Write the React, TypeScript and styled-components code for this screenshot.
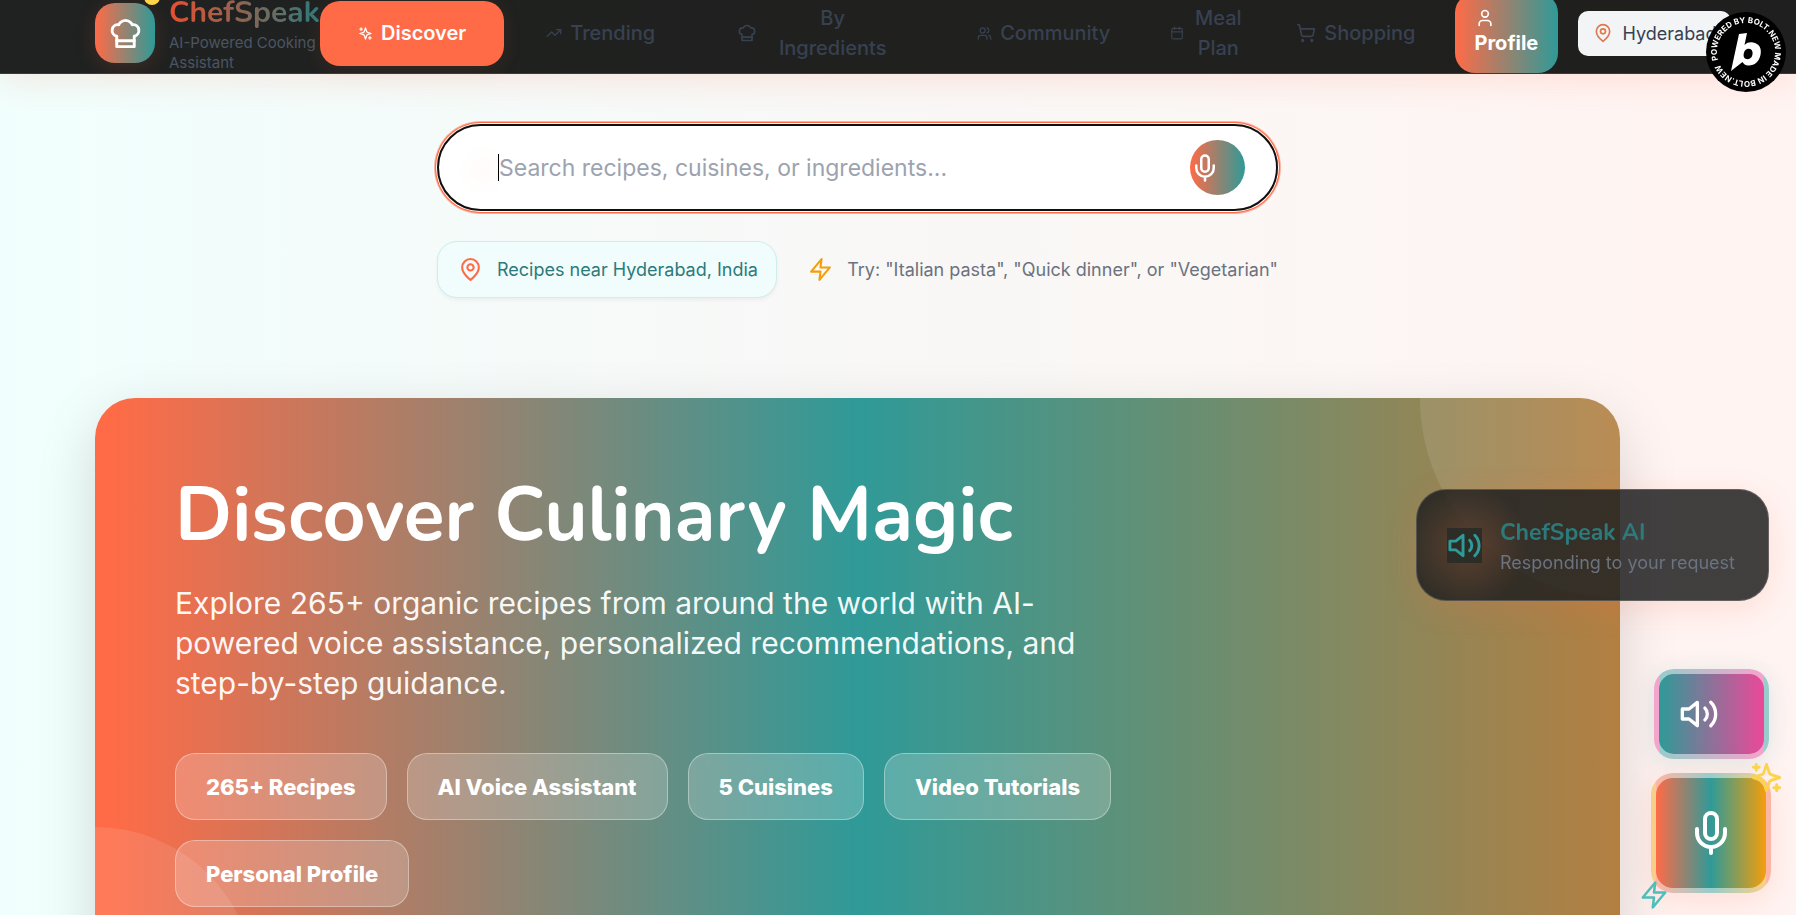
import React from "react";
import styled, { createGlobalStyle, css } from "styled-components";
import { ShoppingCart, TrendingUp, Users, Calendar } from "lucide-react";

const coral = "#ff6b47";
const teal = "#2f9a98";
const body = `Inter, "Liberation Sans", sans-serif`;
const display = `Nunito, Lato, "Open Sans", sans-serif`;

const GlobalStyle = createGlobalStyle`
  * { box-sizing: border-box; }
  body {
    margin: 0;
    font-family: ${body};
    background: #fff3f1;
    overflow-x: hidden;
  }
  button, input { font-family: inherit; }
  button { cursor: pointer; border: 0; }
  svg { flex: none; display: block; }
`;

/* ---------- icons ---------- */
type IconProps = { size: number };
const Glyph = styled.svg.attrs({
  viewBox: "0 0 24 24",
  fill: "none",
  stroke: "currentColor",
  strokeWidth: 2,
  strokeLinecap: "round",
  strokeLinejoin: "round",
  "aria-hidden": true,
})``;

const ChefHat = ({ size }: IconProps) => (
  <Glyph width={size} height={size}>
    <path d="M6 13.87A4 4 0 0 1 7.41 6a5.11 5.11 0 0 1 1.05-1.54 5 5 0 0 1 7.08 0A5.11 5.11 0 0 1 16.59 6 4 4 0 0 1 18 13.87V21H6Z" />
    <path d="M6 17h12" />
  </Glyph>
);
const Sparkles = ({ size }: IconProps) => (
  <Glyph width={size} height={size}>
    <path d="m12 3-1.912 5.813a2 2 0 0 1-1.275 1.275L3 12l5.813 1.912a2 2 0 0 1 1.275 1.275L12 21l1.912-5.813a2 2 0 0 1 1.275-1.275L21 12l-5.813-1.912a2 2 0 0 1-1.275-1.275L12 3Z" />
    <path d="M5 3v4M19 17v4M3 5h4M17 19h4" />
  </Glyph>
);
const Pin = ({ size }: IconProps) => (
  <Glyph width={size} height={size}>
    <path d="M20 10c0 6-8 12-8 12s-8-6-8-12a8 8 0 0 1 16 0Z" />
    <circle cx="12" cy="10" r="3" />
  </Glyph>
);
const Bolt = ({ size }: IconProps) => (
  <Glyph width={size} height={size}>
    <path d="M13 2 3 14h9l-1 8 10-12h-9l1-8Z" />
  </Glyph>
);
const Mic = ({ size }: IconProps) => (
  <Glyph width={size} height={size}>
    <path d="M12 2a3 3 0 0 0-3 3v7a3 3 0 0 0 6 0V5a3 3 0 0 0-3-3Z" />
    <path d="M19 10v2a7 7 0 0 1-14 0v-2M12 19v3" />
  </Glyph>
);
const Volume = ({ size }: IconProps) => (
  <Glyph width={size} height={size}>
    <path d="M11 5 6 9H2v6h4l5 4V5Z" />
    <path d="M15.54 8.46a5 5 0 0 1 0 7.07M19.07 4.93a10 10 0 0 1 0 14.14" />
  </Glyph>
);
const Person = ({ size }: IconProps) => (
  <Glyph width={size} height={size}>
    <path d="M19 21v-2a4 4 0 0 0-4-4H9a4 4 0 0 0-4 4v2" />
    <circle cx="12" cy="7" r="4" />
  </Glyph>
);

/* ---------- page ---------- */
const Page = styled.div`
  height: 100vh;
  overflow: hidden;
  background: linear-gradient(90deg, #f0fffd 0%, #f8f8f7 45%, #fbf7f5 68%, #fff4f2 92%);
`;

const Header = styled.header`
  position: relative;
  z-index: 2;
  height: 74px;
  padding: 0 20px 8px 95px;
  display: flex;
  align-items: center;
  background: linear-gradient(90deg, #1f2221, #20201e 60%, #1f1f1f);
  box-shadow: inset 0 -1px 0 #3a3a3a, 0 8px 32px rgba(255, 107, 71, 0.14);
`;

const Brand = styled.a`
  flex: none;
  display: flex;
  align-items: center;
  gap: 14px;
  width: 225px;
  text-decoration: none;
`;
const BrandMark = styled.span`
  position: relative;
  flex: none;
  width: 60px;
  height: 60px;
  border-radius: 20px;
  display: grid;
  place-items: center;
  color: #fff;
  background: linear-gradient(90deg, ${coral}, ${teal});
  box-shadow: 0 4px 20px rgba(255, 107, 71, 0.15);
`;
const BrandDot = styled.span`
  position: absolute;
  top: -14px;
  right: -5px;
  width: 16px;
  height: 16px;
  border-radius: 50%;
  background: #ffd54a;
`;
const BrandText = styled.span`
  display: flex;
  flex-direction: column;
  white-space: nowrap;
`;
const BrandName = styled.span`
  font: 700 30px/40px ${display};
  color: transparent;
  background: linear-gradient(90deg, #e8502f, #2c7a7b);
  background-clip: text;
  -webkit-background-clip: text;
`;
const Tagline = styled.span`
  width: 150px;
  font-size: 15px;
  line-height: 20px;
  color: #4b5563;
  white-space: normal;
`;

const Nav = styled.nav`
  display: flex;
  align-items: center;
  gap: 4px;
`;
const NavItem = styled.button<{ $active?: boolean; $start?: number; $end?: number }>`
  height: 65px;
  display: flex;
  align-items: center;
  gap: 8px;
  padding: 0 ${(p) => p.$end ?? 38}px 0 ${(p) => p.$start ?? 38}px;
  border-radius: 20px;
  background: none;
  color: #374151;
  font-size: 20px;
  line-height: 30px;
  font-weight: 500;
  ${(p) =>
    p.$active &&
    css`
      background: ${coral};
      color: #fff;
      font-weight: 600;
      box-shadow: 0 4px 20px rgba(255, 107, 71, 0.1);
    `}
`;
const NavLabel = styled.span<{ $width?: number }>`
  width: ${(p) => (p.$width ? p.$width + "px" : "auto")};
  text-align: center;
`;
const ProfileButton = styled.button`
  flex: none;
  width: 103px;
  height: 80px;
  margin-left: 13px;
  padding: 0 20px;
  display: flex;
  flex-direction: column;
  align-items: flex-start;
  justify-content: center;
  border-radius: 20px;
  background: linear-gradient(90deg, ${coral}, ${teal});
  color: #fff;
  font-size: 20px;
  line-height: 30px;
  font-weight: 700;
`;
const LocationButton = styled.button`
  flex: none;
  height: 45px;
  margin-left: 20px;
  padding: 0 15px;
  display: flex;
  align-items: center;
  gap: 10px;
  border-radius: 10px;
  background: #f3f4f6;
  color: #374151;
  font-size: 18px;
  white-space: nowrap;
  svg { color: #dd7a4f; }
`;

const BadgeLink = styled.a`
  position: fixed;
  z-index: 3;
  top: 12px;
  right: 10px;
`;

const Main = styled.main`
  padding: 50px 176px 0 95px;
  display: flex;
  flex-direction: column;
`;

const SearchSection = styled.section`
  width: 841px;
  max-width: 100%;
  align-self: center;
`;
const SearchBar = styled.form`
  position: relative;
  height: 87px;
  padding: 0 31px 0 59px;
  display: flex;
  align-items: center;
  justify-content: space-between;
  border: 2px solid #101010;
  border-radius: 44px;
  background: radial-gradient(circle at 44px 44px, #fffbfa, #fff 26px);
  box-shadow: 0 0 0 1px #fff, 0 0 0 2px ${coral}, 0 0 0 3px rgba(255, 107, 71, 0.5);
`;
const SearchInput = styled.input`
  flex: 1;
  min-width: 0;
  height: 60px;
  padding: 0;
  border: 0;
  outline: 0;
  background: none;
  font-size: 23px;
  color: #111;
  &::placeholder { color: #9ca3af; opacity: 1; }
`;
const Caret = styled.span`
  width: 1px;
  height: 27px;
  background: #000;
`;
const VoiceButton = styled.button`
  width: 55px;
  height: 55px;
  padding: 0;
  display: flex;
  align-items: center;
  border-radius: 50%;
  background: linear-gradient(90deg, ${coral}, ${teal});
  color: #fff;
`;
const Hints = styled.div`
  margin-top: 30px;
  display: flex;
  align-items: center;
  justify-content: space-between;
  font-size: 18px;
  white-space: nowrap;
`;
const NearChip = styled.button`
  height: 57px;
  padding: 0 18px 0 20px;
  display: flex;
  align-items: center;
  gap: 14px;
  border: 1px solid #cdeeea;
  border-radius: 20px;
  background: #f0fdfc;
  box-shadow: 0 2px 4px rgba(0, 0, 0, 0.05);
  color: #2c7a7b;
  font-size: 18px;
  svg { color: ${coral}; }
`;
const Tip = styled.p`
  margin: 0;
  display: flex;
  align-items: center;
  gap: 14px;
  color: #6b7280;
  svg { color: #f59e0b; }
`;

const Hero = styled.section`
  position: relative;
  margin-top: 100px;
  padding: 80px 80px 70px;
  border-radius: 40px;
  background: linear-gradient(90deg, ${coral} 1%, ${teal} 50%, #b37f41 100%);
  box-shadow: 0 20px 60px rgba(0, 0, 0, 0.15);
  color: #fff;
`;
const HeroDecor = styled.div`
  position: absolute;
  inset: 0;
  overflow: hidden;
  border-radius: 40px;
  &::before, &::after {
    content: "";
    position: absolute;
    border-radius: 50%;
    background: rgba(255, 255, 255, 0.1);
  }
  &::before { top: -200px; right: -200px; width: 400px; height: 400px; }
  &::after { bottom: -170px; left: -160px; width: 320px; height: 320px; }
`;
const HeroBody = styled.div`
  position: relative;
  max-width: 960px;
`;
const HeroTitle = styled.h1`
  margin: 0;
  font: 700 75px/75px ${display};
  white-space: nowrap;
`;
const HeroText = styled.p`
  margin: 30px 0 50px;
  max-width: 920px;
  font-size: 30px;
  line-height: 40px;
  color: rgba(255, 255, 255, 0.95);
`;
const Features = styled.ul`
  margin: 0;
  padding: 0;
  list-style: none;
  display: flex;
  flex-wrap: wrap;
  gap: 20px;
`;
const Feature = styled.li`
  height: 67px;
  padding: 0 30px;
  display: flex;
  align-items: center;
  border: 1px solid rgba(255, 255, 255, 0.35);
  border-radius: 20px;
  background: rgba(255, 255, 255, 0.2);
  font-size: 22px;
  font-weight: 800;
`;

/* ---------- floating voice controls ---------- */
const StatusPanel = styled.aside`
  position: fixed;
  z-index: 2;
  top: 489px;
  right: 27px;
  height: 112px;
  padding: 0 33px 0 30px;
  display: flex;
  align-items: center;
  gap: 18px;
  border: 1px solid rgba(255, 255, 255, 0.18);
  border-radius: 30px;
  background: radial-gradient(circle at 50px 56px, rgba(82, 52, 40, 0.85), rgba(31, 31, 31, 0.85) 60px);
  box-shadow: 0 8px 32px rgba(255, 107, 71, 0.16);
`;
const StatusIcon = styled.span`
  background: #2c2d26;
  color: ${teal};
`;
const StatusText = styled.div`
  padding-top: 4px;
`;
const StatusTitle = styled.h2`
  margin: 0;
  font: 700 23px/32px ${display};
  color: #2c7a7b;
`;
const StatusNote = styled.p`
  margin: 0;
  font-size: 18px;
  line-height: 28px;
  color: #6b7280;
`;
const FloatingStack = styled.div`
  position: fixed;
  z-index: 2;
  right: 25px;
  bottom: 22px;
  display: flex;
  flex-direction: column;
  align-items: center;
  gap: 14px;
`;
const SpeakerButton = styled.button`
  width: 115px;
  height: 90px;
  padding: 0 20px;
  display: flex;
  align-items: center;
  border: 5px solid rgba(255, 255, 255, 0.5);
  border-radius: 20px;
  background: linear-gradient(90deg, ${teal}, #ec4899);
  box-shadow: 0 4px 24px rgba(49, 151, 149, 0.16);
  color: #fff;
`;
const TalkButton = styled.button`
  position: relative;
  width: 120px;
  height: 120px;
  padding: 0;
  display: grid;
  place-items: center;
  border: 5px solid rgba(255, 255, 255, 0.5);
  border-radius: 22px;
  background: linear-gradient(90deg, ${coral}, ${teal} 50%, #f59e0b);
  box-shadow: 0 8px 32px rgba(255, 107, 71, 0.16);
  color: #fff;
`;
const Accent = styled.span<{ $place: "top" | "bottom" }>`
  position: absolute;
  ${(p) =>
    p.$place === "top"
      ? css`
          top: -18px;
          right: -18px;
          color: #fcd34d;
        `
      : css`
          bottom: -22px;
          left: -17px;
          color: #4fbdba;
        `}
`;

const features = ["265+ Recipes", "AI Voice Assistant", "5 Cuisines", "Video Tutorials", "Personal Profile"];

const BoltBadge = () => (
  <svg width="80" height="80" viewBox="0 0 80 80" role="img" aria-label="Powered by Bolt.new">
    <circle cx="40" cy="40" r="40" fill="#000" />
    <defs>
      <path id="ring" d="M12 48 A29 29 0 0 1 68 32 A29 29 0 0 1 12 48" />
    </defs>
    <text fill="#fff" fontFamily="Inter, sans-serif" fontSize="8" fontWeight="700">
      <textPath href="#ring">POWERED BY BOLT.NEW MADE IN BOLT.NEW</textPath>
    </text>
    <path
      fillRule="evenodd"
      fill="#fff"
      d="M33 22 L41 21 L38.500 33 C41 30.500 44 30 47 30.500 C53 31.500 56 36 54.500 43 C53 50 48 54 42 53.500 C39.500 53.300 37.500 52 36.500 50 L25 59 Z M41 37 C37.500 38 36 46 40 47 C45 48 47 44 46.500 40 C46 37 43.500 36.300 41 37 Z"
    />
  </svg>
);

export default function App() {
  return (
    <Page>
      <GlobalStyle />
      <Header>
        <Brand href="#">
          <BrandMark>
            <BrandDot />
            <ChefHat size={35} />
          </BrandMark>
          <BrandText>
            <BrandName>ChefSpeak</BrandName>
            <Tagline>AI-Powered Cooking Assistant</Tagline>
          </BrandText>
        </Brand>
        <Nav>
          <NavItem $active>
            <Sparkles size={15} />
            <NavLabel>Discover</NavLabel>
          </NavItem>
          <NavItem>
            <TrendingUp size={16} />
            <NavLabel>Trending</NavLabel>
          </NavItem>
          <NavItem $start={40} $end={47}>
            <ChefHat size={20} />
            <NavLabel $width={135}>By Ingredients</NavLabel>
          </NavItem>
          <NavItem $start={26} $end={30}>
            <Users size={15} />
            <NavLabel>Community</NavLabel>
          </NavItem>
          <NavItem $start={26} $end={22}>
            <Calendar size={14} />
            <NavLabel $width={52}>Meal Plan</NavLabel>
          </NavItem>
          <NavItem $start={26} $end={26}>
            <ShoppingCart size={20} />
            <NavLabel>Shopping</NavLabel>
          </NavItem>
        </Nav>
        <ProfileButton>
          <Person size={20} />
          Profile
        </ProfileButton>
        <LocationButton>
          <Pin size={20} />
          Hyderabad
        </LocationButton>
      </Header>

      <Main>
        <SearchSection>
          <SearchBar role="search">
            <Caret />
            <SearchInput aria-label="Search recipes" placeholder="Search recipes, cuisines, or ingredients..." />
            <VoiceButton type="button" aria-label="Search by voice">
              <Mic size={30} />
            </VoiceButton>
          </SearchBar>
          <Hints>
            <NearChip>
              <Pin size={25} />
              Recipes near Hyderabad, India
            </NearChip>
            <Tip>
              <Bolt size={25} />
              Try: "Italian pasta", "Quick dinner", or "Vegetarian"
            </Tip>
          </Hints>
        </SearchSection>

        <Hero>
          <HeroDecor />
          <HeroBody>
            <HeroTitle>Discover Culinary Magic</HeroTitle>
            <HeroText>
              Explore 265+ organic recipes from around the world with AI-powered voice assistance, personalized
              recommendations, and step-by-step guidance.
            </HeroText>
            <Features>
              {features.map((f) => (
                <Feature key={f}>{f}</Feature>
              ))}
            </Features>
          </HeroBody>
        </Hero>
      </Main>

      <BadgeLink href="#" aria-label="Powered by Bolt.new">
        <BoltBadge />
      </BadgeLink>

      <StatusPanel>
        <StatusIcon>
          <Volume size={35} />
        </StatusIcon>
        <StatusText>
          <StatusTitle>ChefSpeak AI</StatusTitle>
          <StatusNote>Responding to your request</StatusNote>
        </StatusText>
      </StatusPanel>

      <FloatingStack>
        <SpeakerButton aria-label="Speaker">
          <Volume size={40} />
        </SpeakerButton>
        <TalkButton aria-label="Talk to ChefSpeak">
          <Mic size={48} />
          <Accent $place="top">
            <Sparkles size={35} />
          </Accent>
          <Accent $place="bottom">
            <Bolt size={30} />
          </Accent>
        </TalkButton>
      </FloatingStack>
    </Page>
  );
}
